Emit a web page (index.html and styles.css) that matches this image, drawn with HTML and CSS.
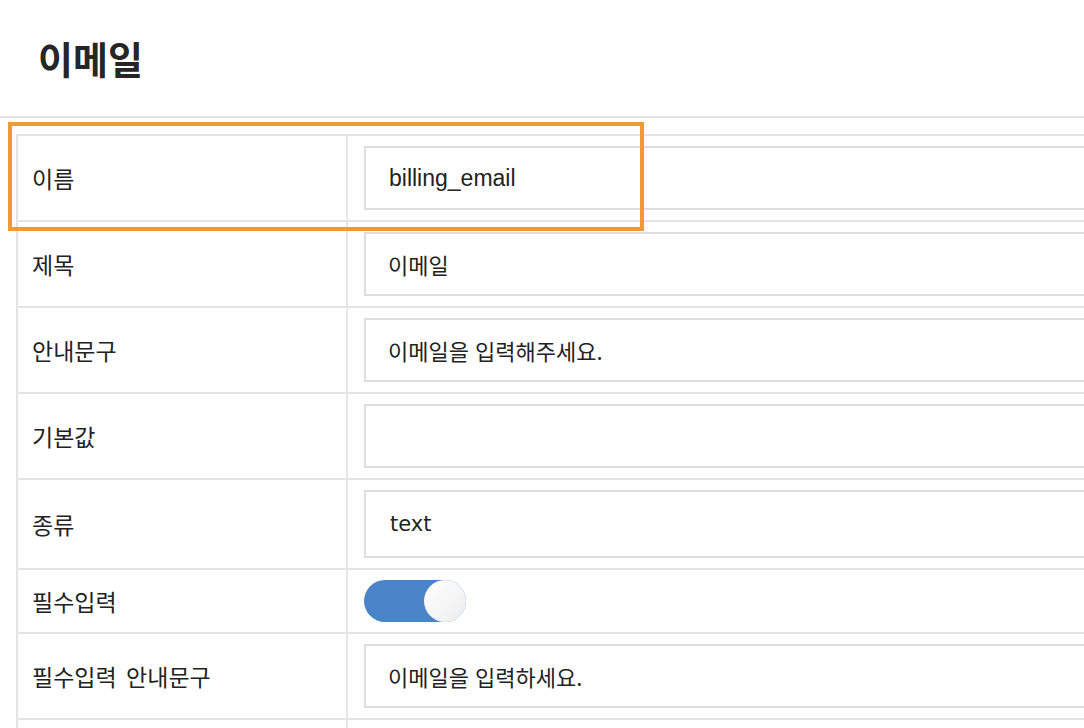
FILE: index.html
```html
<!DOCTYPE html>
<html lang="ko">
<head>
<meta charset="utf-8">
<title>이메일</title>
<link rel="stylesheet" href="styles.css">
</head>
<body>
<header class="page-head">
  <h1 class="page-title">이메일</h1>
</header>
<main class="content">
  <div class="highlight"></div>
  <div class="form-table">
    <div class="row">
      <div class="label">이름</div>
      <div class="value"><div class="field latin">billing_email</div></div>
    </div>
    <div class="row">
      <div class="label">제목</div>
      <div class="value"><div class="field">이메일</div></div>
    </div>
    <div class="row">
      <div class="label">안내문구</div>
      <div class="value"><div class="field">이메일을 입력해주세요.</div></div>
    </div>
    <div class="row">
      <div class="label">기본값</div>
      <div class="value"><div class="field"></div></div>
    </div>
    <div class="row">
      <div class="label">종류</div>
      <div class="value"><div class="field select">text</div></div>
    </div>
    <div class="row">
      <div class="label">필수입력</div>
      <div class="value"><div class="toggle"><span class="thumb"></span></div></div>
    </div>
    <div class="row">
      <div class="label">필수입력 안내문구</div>
      <div class="value"><div class="field">이메일을 입력하세요.</div></div>
    </div>
    <div class="row">
      <div class="label">&nbsp;</div>
      <div class="value"><div class="field"></div></div>
    </div>
  </div>
</main>
</body>
</html>
```

FILE: styles.css
```css
html, body {
  margin: 0;
  padding: 0;
  overflow: hidden;
  background: #ffffff;
}

body {
  font-family: "Noto Sans CJK KR", "Noto Sans", sans-serif;
  color: #222222;
}

.page-head {
  height: 116px;
  border-bottom: 2px solid #e2e2e2;
  display: flex;
  align-items: center;
  padding-left: 38px;
}

.page-title {
  margin: 0;
  font-size: 38px;
  font-weight: 700;
  line-height: 1;
  color: #262626;
}

.content {
  position: relative;
  padding-top: 16px;
}

.highlight {
  position: absolute;
  left: 8px;
  top: 4px;
  width: 628px;
  height: 101px;
  border: 4px solid #ee9a36;
  z-index: 2;
  pointer-events: none;
}

.form-table {
  margin-left: 16px;
  width: 1300px;
  border-left: 2px solid #e4e4e4;
  border-top: 2px solid #e2e2e2;
}

.row {
  display: flex;
  border-bottom: 2px solid #e4e4e4;
}

.label {
  width: 314px;
  flex: none;
  padding-left: 14px;
  border-right: 2px solid #e6e6e6;
  display: flex;
  align-items: center;
  font-size: 23px;
  word-spacing: 3px;
  color: #222222;
}

.value {
  flex: 1;
  padding: 10px 16px;
}

.field {
  height: 60px;
  border: 2px solid #dedede;
  display: flex;
  align-items: center;
  padding-left: 22px;
  font-size: 22px;
  color: #222222;
}

.field.latin {
  font-family: "Liberation Sans", Arial, sans-serif;
  font-size: 23px;
  padding-left: 23px;
}

.field.select {
  height: 64px;
  font-family: "DejaVu Sans", sans-serif;
  font-size: 21px;
  padding-left: 24px;
}

.toggle {
  width: 102px;
  height: 42px;
  border-radius: 21px;
  background: #4a84c8;
  position: relative;
}

.thumb {
  position: absolute;
  right: 0;
  top: 0;
  width: 42px;
  height: 42px;
  border-radius: 50%;
  background: linear-gradient(135deg, #ffffff 0%, #f5f5f5 60%, #ebebeb 100%);
}
```
